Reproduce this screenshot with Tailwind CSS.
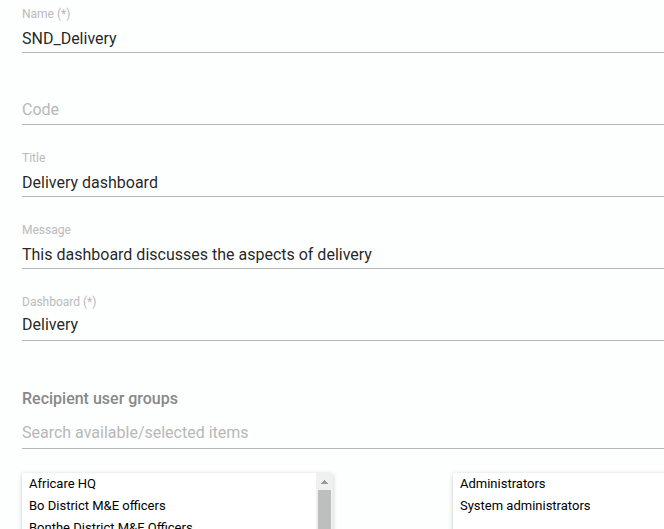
<!DOCTYPE html>
<html lang="en">
<head>
<meta charset="utf-8">
<meta name="viewport" content="width=device-width, initial-scale=1">
<title>Push analysis</title>
<script src="https://cdn.jsdelivr.net/npm/@tailwindcss/browser@4"></script>
</head>
<body class="bg-[#fdfefe] font-[Roboto,sans-serif] text-base text-black/87">
<main class="h-screen overflow-hidden pl-[22px]">
  <form>
    <div class="flex flex-col gap-[25px] pt-1.5">
      <div class="flex flex-col">
        <label for="name" class="text-xs text-[#bababa]">Name (*)</label>
        <input id="name" type="text" value="SND_Delivery" class="h-[31px] w-full border-b border-[#b3b5b5] pt-[3px] outline-none">
      </div>
      <div class="flex flex-col pt-4">
        <input id="code" type="text" aria-label="Code" placeholder="Code" class="h-[31px] w-full border-b border-[#b3b5b5] pt-px outline-none placeholder:text-[#b8b8b8]">
      </div>
      <div class="flex flex-col">
        <label for="title" class="text-xs text-[#bababa]">Title</label>
        <input id="title" type="text" value="Delivery dashboard" class="h-[31px] w-full border-b border-[#b3b5b5] pt-[3px] outline-none">
      </div>
      <div class="flex flex-col">
        <label for="message" class="text-xs text-[#bababa]">Message</label>
        <input id="message" type="text" value="This dashboard discusses the aspects of delivery" class="h-[31px] w-full border-b border-[#b3b5b5] pt-[3px] outline-none">
      </div>
      <div class="flex flex-col">
        <label for="dashboard" class="text-xs text-[#bababa]">Dashboard (*)</label>
        <select id="dashboard" class="h-[31px] w-full appearance-none border-b border-[#b3b5b5] pb-px outline-none">
          <option>Delivery</option>
        </select>
      </div>
    </div>

    <section class="pt-[46px]">
      <h2 class="font-medium text-[#888888]"><label for="search">Recipient user groups</label></h2>
      <input id="search" type="text" placeholder="Search available/selected items" class="mt-1 h-[34px] w-full border-b border-[#b3b5b5] pt-px outline-none placeholder:text-[#b8b8b8]">

      <div class="mt-6 flex gap-[120px]">
        <div class="flex h-64 w-[311px] shrink-0 overflow-hidden rounded-xs bg-white shadow-[0_1px_4px_rgba(0,0,0,0.22)]">
          <select multiple aria-label="Available user groups" class="h-full min-w-0 flex-1 overflow-hidden pt-[3px] text-[13px] text-black outline-none">
            <option class="h-[22px] px-[7px] py-0 leading-[22px]">Africare HQ</option>
            <option class="h-[22px] px-[7px] py-0 leading-[22px]">Bo District M&amp;E officers</option>
            <option class="h-[22px] px-[7px] py-0 leading-[22px]">Bonthe District M&amp;E Officers</option>
          </select>
          <div class="flex w-[17px] flex-col items-center bg-[#eff0f0]" aria-hidden="true">
            <svg class="h-[17px] w-[13px]" viewBox="0 0 13 17" fill="#999b9b" shape-rendering="crispEdges"><path d="M6 7h1v1h1v1h1v1h1v1H3v-1h1V9h1V8h1z"/></svg>
            <div class="w-[13px] flex-1 bg-[#bdbebe]"></div>
          </div>
        </div>
        <div class="h-64 w-[311px] shrink-0 overflow-hidden rounded-xs bg-white shadow-[0_1px_4px_rgba(0,0,0,0.22)]">
          <select multiple aria-label="Selected user groups" class="h-full w-full overflow-hidden pt-[3px] text-[13px] text-black outline-none">
            <option class="h-[22px] px-[7px] py-0 leading-[22px]">Administrators</option>
            <option class="h-[22px] px-[7px] py-0 leading-[22px]">System administrators</option>
          </select>
        </div>
      </div>
    </section>
  </form>
</main>
</body>
</html>
